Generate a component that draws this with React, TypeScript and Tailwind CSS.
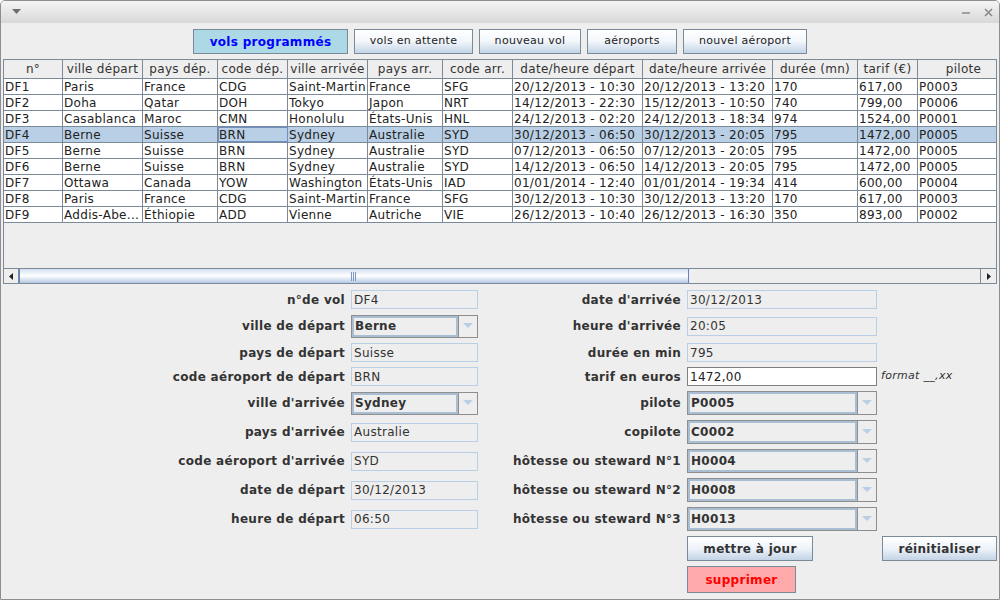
import React from "react";

const cols = [
    { h: "n°", w: "w-[59px]" },
    { h: "ville départ", w: "w-[80px]" },
    { h: "pays dép.", w: "w-[75px]" },
    { h: "code dép.", w: "w-[70px]" },
    { h: "ville arrivée", w: "w-[80px]" },
    { h: "pays arr.", w: "w-[75px]" },
    { h: "code arr.", w: "w-[70px]" },
    { h: "date/heure départ", w: "w-[130px]" },
    { h: "date/heure arrivée", w: "w-[130px]" },
    { h: "durée (mn)", w: "w-[85px]" },
    { h: "tarif (€)", w: "w-[60px]" },
    { h: "pilote", w: "w-[92px]" },
];

const rows = [
    ["DF1", "Paris", "France", "CDG", "Saint-Martin", "France", "SFG", "20/12/2013 - 10:30", "20/12/2013 - 13:20", "170", "617,00", "P0003"],
    ["DF2", "Doha", "Qatar", "DOH", "Tokyo", "Japon", "NRT", "14/12/2013 - 22:30", "15/12/2013 - 10:50", "740", "799,00", "P0006"],
    ["DF3", "Casablanca", "Maroc", "CMN", "Honolulu", "États-Unis", "HNL", "24/12/2013 - 02:20", "24/12/2013 - 18:34", "974", "1524,00", "P0001"],
    ["DF4", "Berne", "Suisse", "BRN", "Sydney", "Australie", "SYD", "30/12/2013 - 06:50", "30/12/2013 - 20:05", "795", "1472,00", "P0005"],
    ["DF5", "Berne", "Suisse", "BRN", "Sydney", "Australie", "SYD", "07/12/2013 - 06:50", "07/12/2013 - 20:05", "795", "1472,00", "P0005"],
    ["DF6", "Berne", "Suisse", "BRN", "Sydney", "Australie", "SYD", "14/12/2013 - 06:50", "14/12/2013 - 20:05", "795", "1472,00", "P0005"],
    ["DF7", "Ottawa", "Canada", "YOW", "Washington", "États-Unis", "IAD", "01/01/2014 - 12:40", "01/01/2014 - 19:34", "414", "600,00", "P0004"],
    ["DF8", "Paris", "France", "CDG", "Saint-Martin", "France", "SFG", "30/12/2013 - 10:30", "30/12/2013 - 13:20", "170", "617,00", "P0003"],
    ["DF9", "Addis-Abe...", "Éthiopie", "ADD", "Vienne", "Autriche", "VIE", "26/12/2013 - 10:40", "26/12/2013 - 16:30", "350", "893,00", "P0002"],
];

function Arrow() {
    return (
        <svg width="10" height="6" viewBox="0 0 10 6">
            <path d="M0 0 L10 0 L5 5 Z" fill="#b8cfe5" />
        </svg>
    );
}

function Field({ value, wide }: { value: string; wide?: boolean }) {
    return (
        <div className={`${wide ? "w-[190px]" : "w-[127px]"} h-[19px] border border-[#b8cfe5] bg-[#eeeeee] pl-[2px] flex items-center text-[12px] text-[#333333] leading-none`}>
            {value}
        </div>
    );
}

function Combo({ value, wide }: { value: string; wide?: boolean }) {
    return (
        <div className={`${wide ? "w-[190px] h-[24px]" : "w-[127px] h-[23px]"} flex border border-[#8e8e8e] bg-[#eeeeee]`}>
            <div className="flex-1 border-2 border-[#a9bdd3] flex items-center pl-[1px] text-[12px] font-bold text-[#333333] leading-none">
                {value}
            </div>
            <div className="w-[19px] border-l border-[#8e8e8e] flex items-center justify-center">
                <Arrow />
            </div>
        </div>
    );
}

function Label({ text }: { text: string }) {
    return (
        <div className="flex items-center justify-end pr-[6px] text-[12px] font-bold text-[#333333] whitespace-nowrap leading-none">
            {text}
        </div>
    );
}

export default function App() {
    const btn = "h-[25px] border border-[#7a8a99] bg-linear-to-b from-[#ffffff] via-[#f2f6fb] to-[#c3d4e6] text-[11px] text-[#222222] flex items-center justify-center";
    const boldBtn = "border border-[#7a8a99] bg-linear-to-b from-[#ffffff] via-[#eef3f9] to-[#c3d4e6] text-[12px] font-bold text-[#333333] flex items-center justify-center";

    return (
        <div className="w-[1000px] h-[600px] bg-[#eeeeee] flex flex-col border border-[#8e8e8e] rounded-t-[5px] overflow-hidden font-['DejaVu_Sans',sans-serif] tracking-[0.3px]">
            {/* title bar */}
            <div className="h-[22px] shrink-0 bg-linear-to-b from-[#f5f5f5] to-[#d8d8d8] flex items-center justify-between pl-[11px] pr-[6px]">
                <svg width="9" height="6" viewBox="0 0 9 6">
                    <path d="M0 0 L9 0 L4.5 5 Z" fill="#6e6e6e" />
                </svg>
                <div className="flex items-center gap-[14px]">
                    <svg width="8" height="8" viewBox="0 0 8 8">
                        <path d="M0 5 L8 5" stroke="#8a8a8a" strokeWidth="1.6" />
                    </svg>
                    <svg width="9" height="9" viewBox="0 0 9 9">
                        <path d="M1 1 L8 8 M8 1 L1 8" stroke="#8a8a8a" strokeWidth="1.6" />
                    </svg>
                </div>
            </div>

            <div className="flex-1 px-[2px] flex flex-col">
                {/* top buttons */}
                <div className="mt-[6px] flex justify-center gap-[6px]">
                    <div className="w-[155px] h-[25px] border border-[#7a8a99] bg-[#add8e6] flex items-center justify-center text-[12px] font-bold text-[#0000ff]">
                        vols programmés
                    </div>
                    <div className={`${btn} w-[119px]`}>vols en attente</div>
                    <div className={`${btn} w-[102px]`}>nouveau vol</div>
                    <div className={`${btn} w-[90px]`}>aéroports</div>
                    <div className={`${btn} w-[124px]`}>nouvel aéroport</div>
                </div>

                {/* table */}
                <div className="mt-[5px] h-[225px] border border-[#7a8a99] flex flex-col overflow-hidden">
                    <div className="flex-1 overflow-hidden">
                        <div className="flex h-[19px] border-b border-[#7a8a99] bg-[#eeeeee]">
                            {cols.map((c) => (
                                <div key={c.h} className={`${c.w} shrink-0 border-r border-[#7a8a99] flex items-center justify-center text-[12px] text-[#333333] whitespace-nowrap overflow-hidden`}>
                                    {c.h}
                                </div>
                            ))}
                        </div>
                        {rows.map((r, i) => (
                            <div key={r[0]} className={`flex h-[16px] border-b border-[#7a8a99] ${i === 3 ? "bg-[#b8cfe5]" : "bg-white"}`}>
                                {r.map((v, j) => (
                                    <div
                                        key={j}
                                        className={`${cols[j].w} shrink-0 border-r border-[#7a8a99] flex items-center pl-[1px] text-[12px] text-[#222222] whitespace-nowrap overflow-hidden leading-none ${i === 3 && j === 3 ? "outline outline-1 -outline-offset-1 outline-[#6d8fc4]" : ""}`}
                                    >
                                        {v}
                                    </div>
                                ))}
                            </div>
                        ))}
                    </div>
                    {/* horizontal scrollbar */}
                    <div className="h-[15px] shrink-0 border-t border-[#7a8a99] flex bg-[#eeeeee]">
                        <div className="w-[15px] border-r border-[#7a8a99] flex items-center justify-center">
                            <svg width="4" height="7" viewBox="0 0 4 7">
                                <path d="M4 0 L0 3.5 L4 7 Z" fill="#222222" />
                            </svg>
                        </div>
                        <div className="w-[670px] border-x border-[#6382bf] bg-linear-to-b from-[#d3e0f1] via-[#ffffff] to-[#b3c8e3] flex items-center justify-center">
                            <svg width="6" height="9" viewBox="0 0 6 9">
                                <path d="M0.5 0 L0.5 9 M2.5 0 L2.5 9 M4.5 0 L4.5 9" stroke="#7d95c0" strokeWidth="1" />
                            </svg>
                        </div>
                        <div className="flex-1" />
                        <div className="w-[16px] border-l border-[#7a8a99] flex items-center justify-center">
                            <svg width="4" height="7" viewBox="0 0 4 7">
                                <path d="M0 0 L4 3.5 L0 7 Z" fill="#222222" />
                            </svg>
                        </div>
                    </div>
                </div>

                {/* form */}
                <div className="mt-[6px] grid grid-cols-[348px_127px_209px_190px_120px] grid-rows-[19px_24px_19px_19px_24px_24px_24px_24px_24px_25px_27px] gap-y-[5px]">
                    <Label text="n°de vol" />
                    <div className="flex items-center"><Field value="DF4" /></div>
                    <Label text="date d'arrivée" />
                    <div className="flex items-center"><Field value="30/12/2013" wide /></div>
                    <div />

                    <Label text="ville de départ" />
                    <div className="flex items-center"><Combo value="Berne" /></div>
                    <Label text="heure d'arrivée" />
                    <div className="flex items-center"><Field value="20:05" wide /></div>
                    <div />

                    <Label text="pays de départ" />
                    <div className="flex items-center"><Field value="Suisse" /></div>
                    <Label text="durée en min" />
                    <div className="flex items-center"><Field value="795" wide /></div>
                    <div />

                    <Label text="code aéroport de départ" />
                    <div className="flex items-center"><Field value="BRN" /></div>
                    <Label text="tarif en euros" />
                    <div className="flex items-center">
                        <div className="w-[190px] h-[19px] border border-[#7f7f7f] bg-white pl-[2px] flex items-center text-[12px] text-[#222222] leading-none">
                            1472,00
                        </div>
                    </div>
                    <div className="flex items-center pl-[4px] text-[11px] italic text-[#333333] whitespace-nowrap">format __,xx</div>

                    <Label text="ville d'arrivée" />
                    <div className="flex items-center"><Combo value="Sydney" /></div>
                    <Label text="pilote" />
                    <div className="flex items-center"><Combo value="P0005" wide /></div>
                    <div />

                    <Label text="pays d'arrivée" />
                    <div className="flex items-center"><Field value="Australie" /></div>
                    <Label text="copilote" />
                    <div className="flex items-center"><Combo value="C0002" wide /></div>
                    <div />

                    <Label text="code aéroport d'arrivée" />
                    <div className="flex items-center"><Field value="SYD" /></div>
                    <Label text="hôtesse ou steward N°1" />
                    <div className="flex items-center"><Combo value="H0004" wide /></div>
                    <div />

                    <Label text="date de départ" />
                    <div className="flex items-center"><Field value="30/12/2013" /></div>
                    <Label text="hôtesse ou steward N°2" />
                    <div className="flex items-center"><Combo value="H0008" wide /></div>
                    <div />

                    <Label text="heure de départ" />
                    <div className="flex items-center"><Field value="06:50" /></div>
                    <Label text="hôtesse ou steward N°3" />
                    <div className="flex items-center"><Combo value="H0013" wide /></div>
                    <div />

                    <div />
                    <div />
                    <div />
                    <div className={`${boldBtn} w-[126px]`}>mettre à jour</div>
                    <div className="pl-[5px]">
                        <div className={`${boldBtn} w-[115px] h-full`}>réinitialiser</div>
                    </div>

                    <div />
                    <div />
                    <div />
                    <div className="w-[109px] border border-[#7a8a99] bg-[#ffaaaa] flex items-center justify-center text-[12px] font-bold text-[#ff0000]">
                        supprimer
                    </div>
                    <div />
                </div>
            </div>
        </div>
    );
}
